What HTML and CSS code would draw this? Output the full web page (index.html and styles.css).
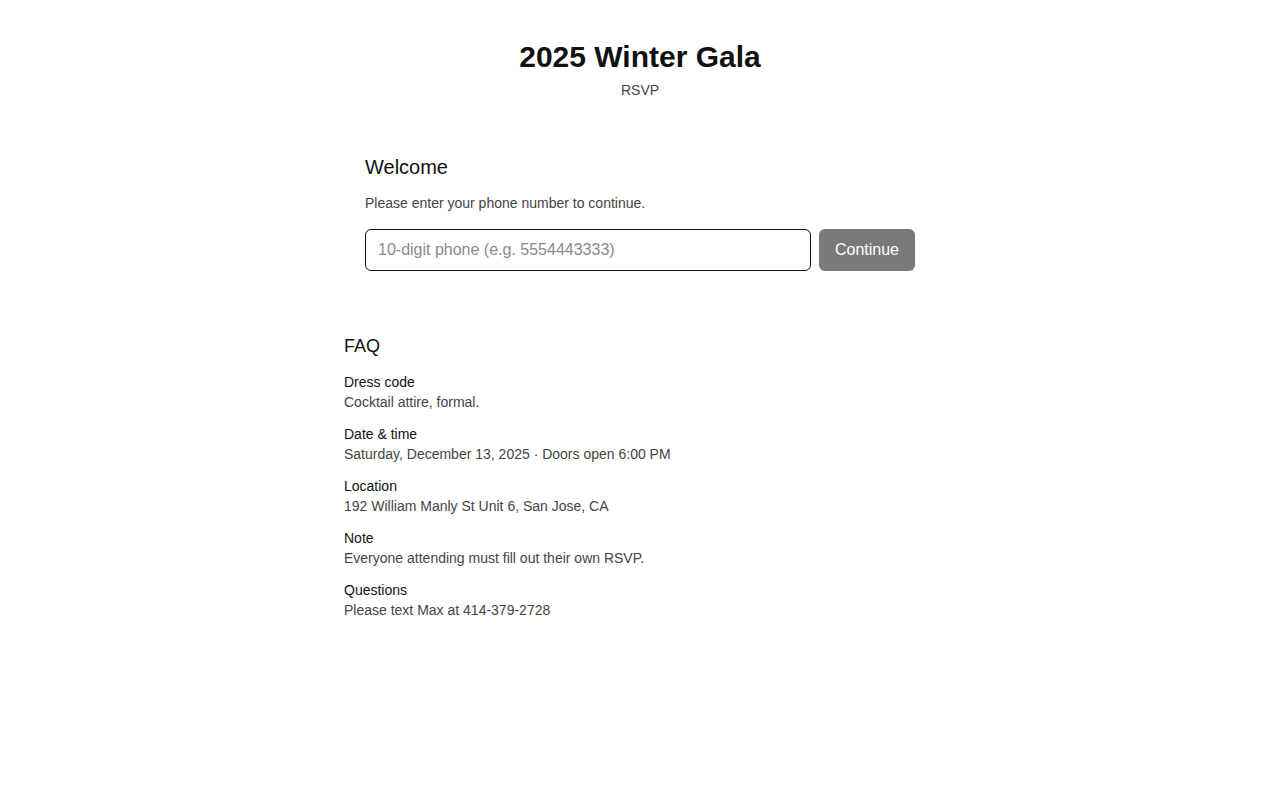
FILE: index.html
```html
<!DOCTYPE html>
<html lang="en">
<head>
<meta charset="utf-8">
<title>2025 Winter Gala — RSVP</title>
<link rel="stylesheet" href="styles.css">
</head>
<body>
<header class="header">
  <h1 class="title">2025 Winter Gala</h1>
  <p class="subtitle">RSVP</p>
</header>
<main class="container">
  <section class="card">
    <h2 class="card-title">Welcome</h2>
    <p class="card-text">Please enter your phone number to continue.</p>
    <form class="phone-row" onsubmit="return false;">
      <input class="phone-input" type="tel" placeholder="10-digit phone (e.g. 5554443333)">
      <button class="btn" type="submit">Continue</button>
    </form>
  </section>
  <section class="faq">
    <h2 class="faq-title">FAQ</h2>
    <div class="faq-item">
      <div class="faq-q">Dress code</div>
      <div class="faq-a">Cocktail attire, formal.</div>
    </div>
    <div class="faq-item">
      <div class="faq-q">Date &amp; time</div>
      <div class="faq-a">Saturday, December 13, 2025 · Doors open 6:00 PM</div>
    </div>
    <div class="faq-item">
      <div class="faq-q">Location</div>
      <div class="faq-a">192 William Manly St Unit 6, San Jose, CA</div>
    </div>
    <div class="faq-item">
      <div class="faq-q">Note</div>
      <div class="faq-a">Everyone attending must fill out their own RSVP.</div>
    </div>
    <div class="faq-item">
      <div class="faq-q">Questions</div>
      <div class="faq-a">Please text Max at 414-379-2728</div>
    </div>
  </section>
</main>
</body>
</html>
```
FILE: styles.css
```css
* { box-sizing: border-box; }
html, body { margin: 0; padding: 0; background: #fff; }
body {
  font-family: "Liberation Sans", Arial, sans-serif;
  color: #111;
}
.header {
  padding-top: 39px;
  text-align: center;
}
.title {
  margin: 0;
  font-size: 30px;
  line-height: 36px;
  font-weight: 700;
  color: #111;
}
.subtitle {
  margin: 5px 0 0;
  font-size: 14px;
  line-height: 20px;
  color: #444;
}
.container {
  width: 592px;
  margin: 34px auto 0;
}
.card {
  padding: 21px;
}
.card-title {
  margin: 0;
  font-size: 20px;
  line-height: 24px;
  font-weight: 400;
  color: #111;
}
.card-text {
  margin: 14px 0 0;
  font-size: 14px;
  line-height: 20px;
  color: #444;
}
.phone-row {
  display: flex;
  gap: 8px;
  margin: 16px 0 0;
}
.phone-input {
  flex: 1;
  height: 42px;
  padding: 0 12px;
  border: 1px solid #111;
  border-radius: 6px;
  font-family: inherit;
  font-size: 16px;
  color: #111;
  background: #fff;
  outline: none;
}
.phone-input::placeholder { color: #8a8a8a; }
.btn {
  width: 96px;
  height: 42px;
  border: none;
  border-radius: 6px;
  background: #7a7a7a;
  color: #fff;
  font-family: inherit;
  font-size: 16px;
  cursor: pointer;
}
.faq {
  margin-top: 43px;
}
.faq-title {
  margin: 0 0 15px;
  font-size: 18px;
  line-height: 22px;
  font-weight: 400;
  color: #111;
}
.faq-item {
  margin-bottom: 12px;
  font-size: 14px;
  line-height: 20px;
}
.faq-q { color: #111; }
.faq-a { color: #444; }
```
